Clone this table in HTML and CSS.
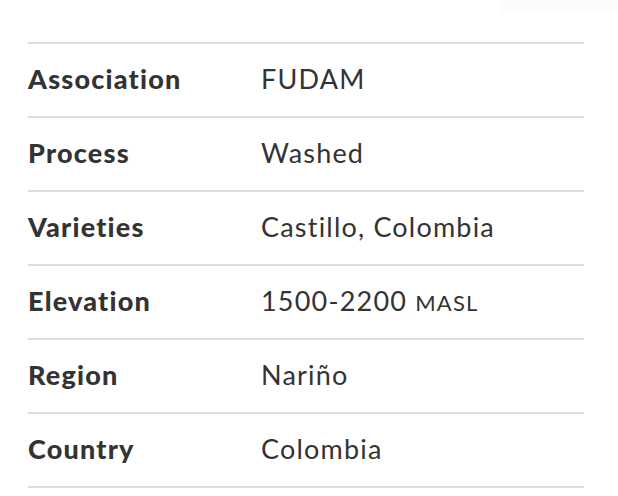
FILE: index.html
```html
<!DOCTYPE html>
<html>
<head>
<meta charset="utf-8">
<link rel="stylesheet" href="styles.css">
</head>
<body>
<div class="topbar"><div class="tab"></div></div>
<table class="specs">
  <tr><th>Association</th><td>FUDAM</td></tr>
  <tr><th>Process</th><td>Washed</td></tr>
  <tr><th>Varieties</th><td>Castillo, Colombia</td></tr>
  <tr><th>Elevation</th><td>1500-2200 <span class="unit">MASL</span></td></tr>
  <tr><th>Region</th><td>Nariño</td></tr>
  <tr><th>Country</th><td>Colombia</td></tr>
</table>
</body>
</html>
```
FILE: styles.css
```css
html, body {
  margin: 0;
  padding: 0;
  background: #fff;
}
body {
  padding: 0 34px 0 28px;
  font-family: Lato, "Open Sans", sans-serif;
  color: #333;
}
.topbar {
  display: flex;
  justify-content: flex-end;
  margin-right: -34px;
  height: 42px;
}
.tab {
  width: 118px;
  height: 13px;
  background: #fcfcfc;
}
.specs {
  width: 556px;
  border-collapse: collapse;
  border-top: 2px solid #dddddd;
}
.specs tr {
  border-bottom: 2px solid #dddddd;
}
.specs th, .specs td {
  height: 68px;
  padding: 0 0 4px 0;
  font-size: 27px;
  text-align: left;
  vertical-align: middle;
}
.specs th {
  width: 233px;
  font-weight: 900;
  letter-spacing: 1.2px;
}
.specs td {
  font-weight: 400;
  letter-spacing: 1.2px;
}
.unit {
  font-size: 22px;
}
```
